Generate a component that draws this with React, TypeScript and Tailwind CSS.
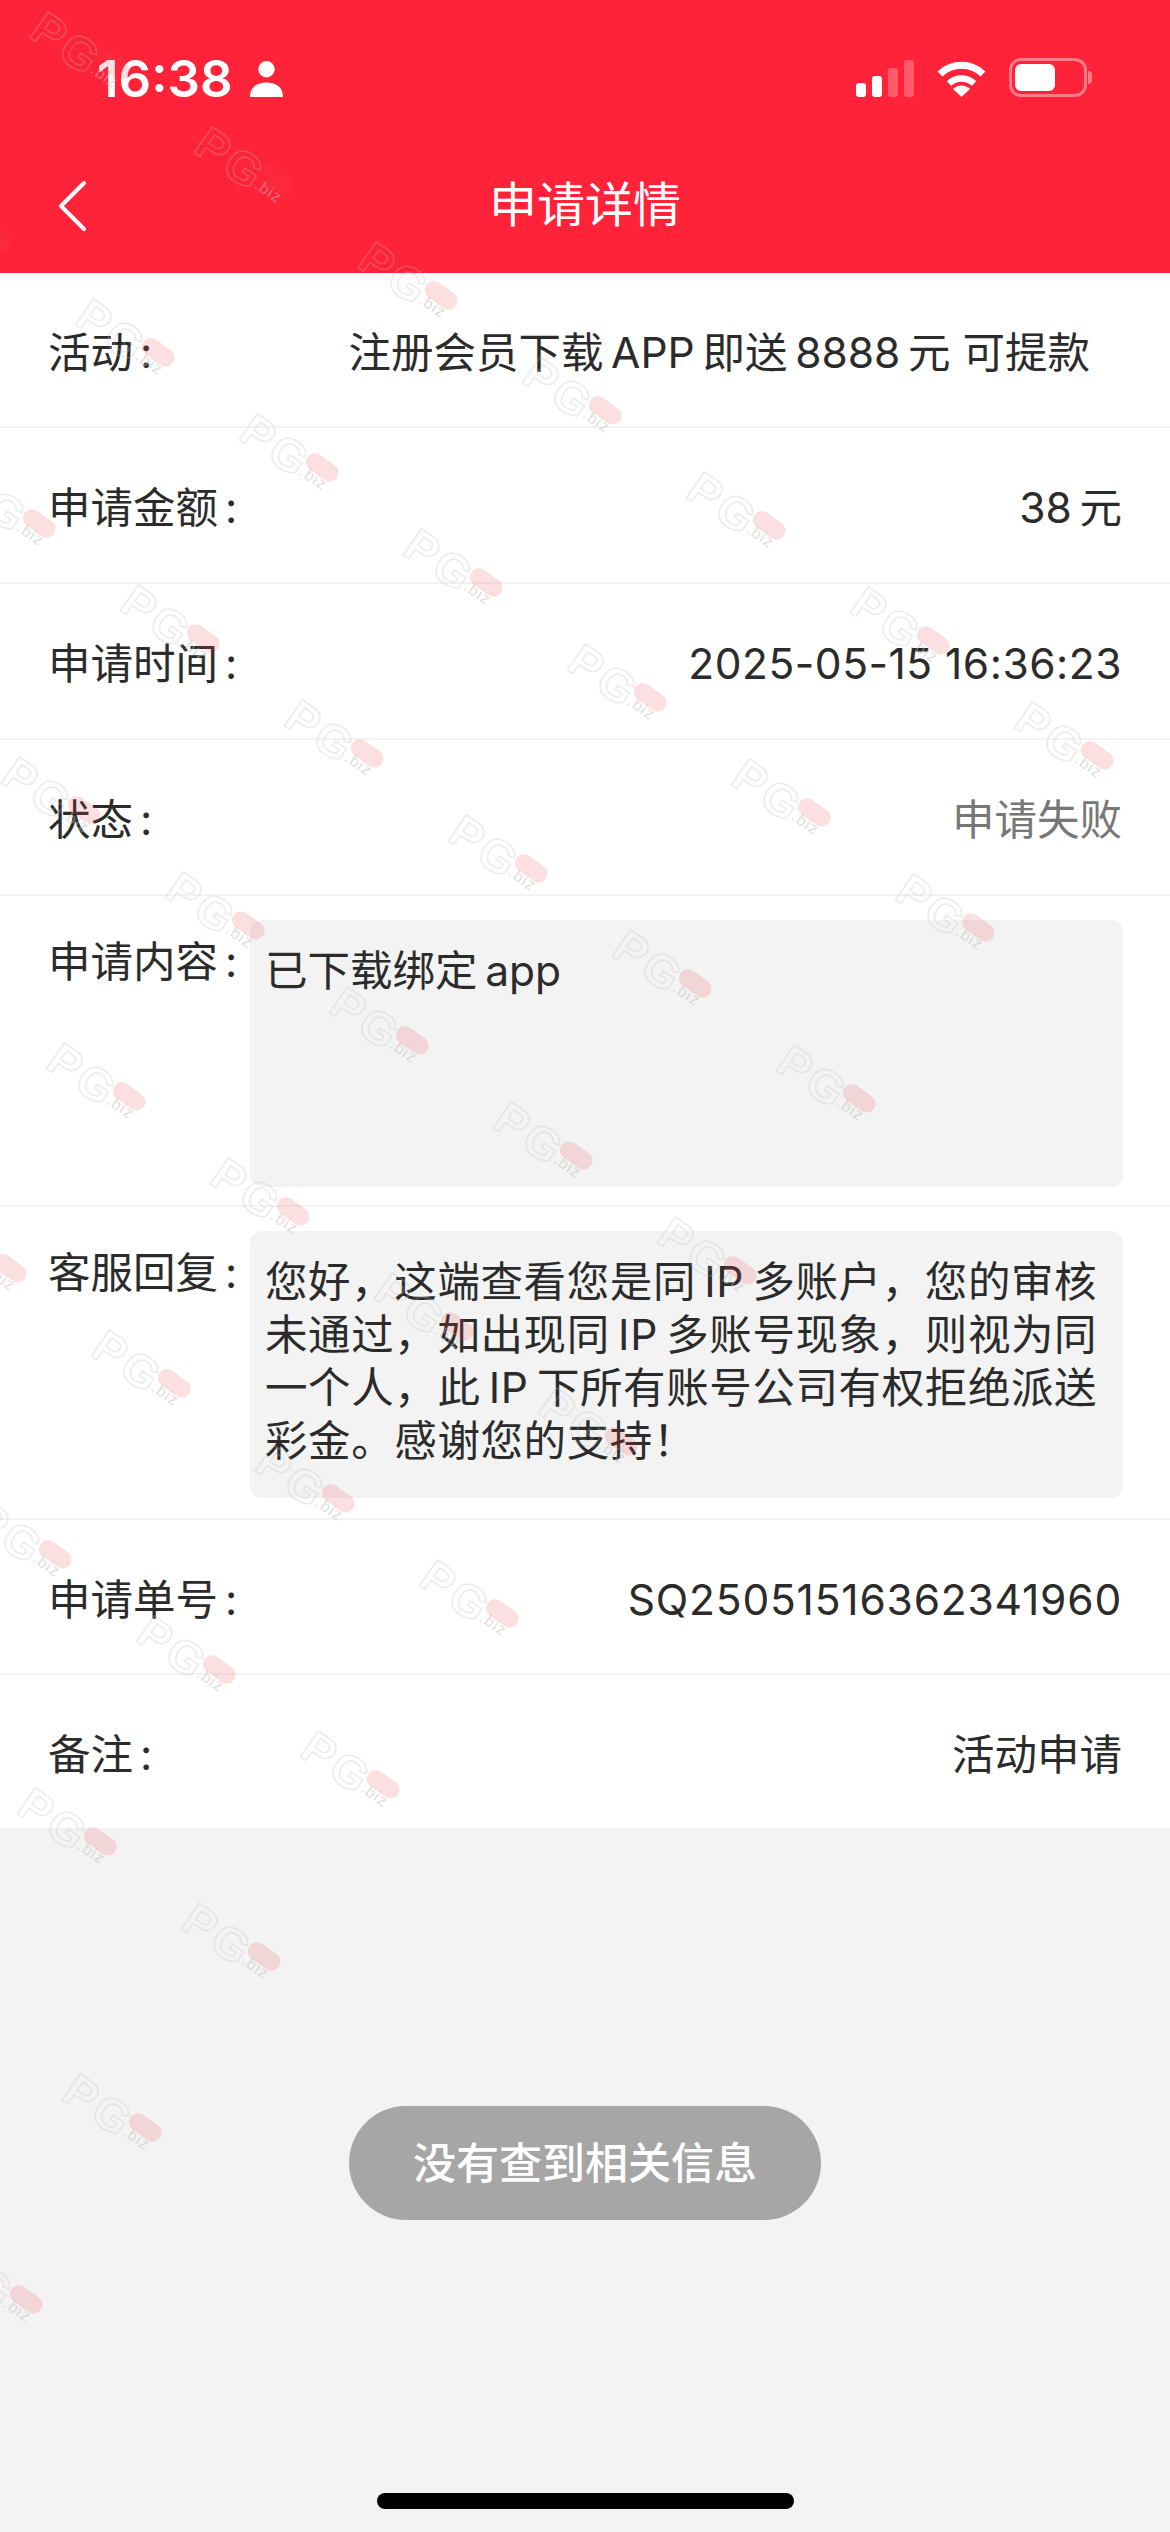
const sans = 'font-["Inter","Noto_Sans_CJK_SC",sans-serif]';

// watermark tiles sit on a skewed lattice, cut off along one diagonal
const marks: { x: number; y: number }[] = [];
for (let m = -9; m <= 0; m++) {
  for (let n = 0; n <= 6 - m; n++) {
    const x = 34 + 164 * n + 283 * m;
    const y = 17 + 115 * n - 56.5 * m;
    if (x > -120 && x < 1170) marks.push({ x, y });
  }
}

function Watermark({ x, y }: { x: number; y: number }) {
  return (
    <div
      className="absolute origin-top-left rotate-[35deg] flex items-start"
      style={{ left: x + 16, top: y - 13 }}
    >
      <span className='font-["Liberation_Sans",sans-serif] text-[46px] font-bold leading-[46px] tracking-[4px] text-transparent [-webkit-text-stroke:1.5px_rgba(190,190,190,0.3)]'>
        PG
      </span>
      <div className="relative mt-[5px] ml-[-5px]">
        <div className="h-[18px] w-[36px] rounded-full bg-[rgba(240,70,80,0.17)]" />
        <span className='absolute left-[2px] top-[15px] font-["Liberation_Sans",sans-serif] text-[16px] leading-[16px] tracking-[1px] text-[rgba(190,190,190,0.5)]'>
          .biz
        </span>
      </div>
    </div>
  );
}

function StatusBar() {
  return (
    <div className="flex h-[97px] items-end justify-between pl-[97px] pr-[78px]">
      <div className="flex items-end gap-[17px]">
        <span className="text-[51px] font-semibold leading-[36px] text-white">16:38</span>
        <svg width="33" height="36" viewBox="0 0 33 36" className="fill-white">
          <circle cx="16.5" cy="8.2" r="8.2" />
          <path d="M0 36C0 26 7 21.5 16.5 21.5S33 26 33 36Z" />
        </svg>
      </div>
      <div className="flex items-end">
        <div className="flex items-end gap-[6px]">
          <div className="h-[14px] w-[10px] rounded-[3px] bg-white" />
          <div className="h-[21px] w-[10px] rounded-[3px] bg-white" />
          <div className="h-[29px] w-[10px] rounded-[3px] bg-white/25" />
          <div className="h-[37px] w-[10px] rounded-[3px] bg-white/25" />
        </div>
        <svg width="49" height="37" viewBox="0 0 49 37" fill="none" className="ml-[23px]">
          <path d="M3 14A31 31 0 0 1 46 14" stroke="white" strokeWidth="7" />
          <path d="M12 23.5A18 18 0 0 1 37 23.5" stroke="white" strokeWidth="6.5" />
          <path d="M24.5 37L16 29A12 12 0 0 1 33 29Z" fill="white" />
        </svg>
        <div className="ml-[23px] flex items-center">
          <div className="h-[39px] w-[78px] rounded-[12px] border-[3px] border-white/40 p-[3px]">
            <div className="h-full w-[40px] rounded-[6px] bg-white" />
          </div>
          <div className="ml-[1px] h-[13px] w-[4px] rounded-r-full bg-white/40" />
        </div>
      </div>
    </div>
  );
}

function NavBar() {
  return (
    <div className="relative flex h-[176px] items-center justify-center pt-[40px]">
      <svg width="30" height="52" viewBox="0 0 30 52" fill="none" className="absolute left-[57px] top-[83px]">
        <path d="M27 3L4 26L27 49" stroke="white" strokeWidth="4" strokeLinecap="round" strokeLinejoin="round" />
      </svg>
      <span className="text-[48px] leading-[56px] text-white">申请详情</span>
    </div>
  );
}

function Label({ text }: { text: string }) {
  return (
    <span className="text-[#2b2b2b]">
      {text}
      <span className="ml-[7px]">:</span>
    </span>
  );
}

function Row({ label, value, height, tone = 'text-[#2b2b2b]', inset = 'pr-[48px]' }: {
  label: string;
  value: string;
  height: string;
  tone?: string;
  inset?: string;
}) {
  return (
    <div className={`flex items-center justify-between border-b-2 border-[#f3f3f3] pl-[48px] pt-[5px] text-[42.5px] leading-[53px] ${height} ${inset}`}>
      <Label text={label} />
      <span className={tone}>{value}</span>
    </div>
  );
}

function BoxRow({ label, height, children }: { label: string; height: string; children: React.ReactNode }) {
  return (
    <div className={`flex items-start border-b-2 border-[#f3f3f3] pl-[48px] pr-[47px] pt-[24px] text-[42.5px] leading-[53px] text-[#2b2b2b] ${height}`}>
      <span className="w-[202px] shrink-0 whitespace-nowrap pt-[15px]">
        <Label text={label} />
      </span>
      <div className="h-[267px] flex-1 rounded-[12px] bg-[#f3f3f3] pl-[15px] pt-[24px]">{children}</div>
    </div>
  );
}

const replyLines = [
  '您好，这端查看您是同\u2009IP\u2009多账户，您的审核',
  '未通过，如出现同\u2009IP\u2009多账号现象，则视为同',
  '一个人，此\u2009IP\u2009下所有账号公司有权拒绝派送',
  '彩金。感谢您的支持！',
];

export default function App() {
  return (
    <div className={`relative h-[2532px] w-[1170px] overflow-hidden bg-[#f3f3f3] ${sans}`}>
      <header className="bg-[#ff233a]">
        <StatusBar />
        <NavBar />
      </header>

      <div className="bg-white">
        <Row
          label="活动"
          value={'注册会员下载\u2009APP\u2009即送\u20098888\u2009元 可提款'}
          height="h-[155px]"
          inset="pr-[80px]"
        />
        <Row label="申请金额" value={'38\u2009元'} height="h-[156px]" />
        <Row label="申请时间" value="2025-05-15 16:36:23" height="h-[156px]" tone="text-[#2b2b2b] tracking-[0.5px]" />
        <Row label="状态" value="申请失败" height="h-[156px]" tone="text-[#777777]" />
        <BoxRow label="申请内容" height="h-[311px]">{'已下载绑定\u2009app'}</BoxRow>
        <BoxRow label="客服回复" height="h-[313px]">
          <div className="tracking-[0.6px]">
            {replyLines.map((line) => (
              <div key={line} className="whitespace-nowrap">{line}</div>
            ))}
          </div>
        </BoxRow>
        <Row label="申请单号" value="SQ25051516362341960" height="h-[155px]" tone="text-[#2b2b2b] tracking-[0.8px]" />
        <Row label="备注" value="活动申请" height="h-[155px]" />
      </div>

      {marks.map((p) => (
        <Watermark key={`${p.x}-${p.y}`} x={p.x} y={p.y} />
      ))}

      <div className="absolute left-[349px] top-[2106px] flex h-[114px] w-[472px] items-center justify-center rounded-[57px] bg-[#a6a6a6] text-[43px] font-medium text-white">
        没有查到相关信息
      </div>
      <div className="absolute left-[377px] top-[2493px] h-[16px] w-[417px] rounded-full bg-black" />
    </div>
  );
}
